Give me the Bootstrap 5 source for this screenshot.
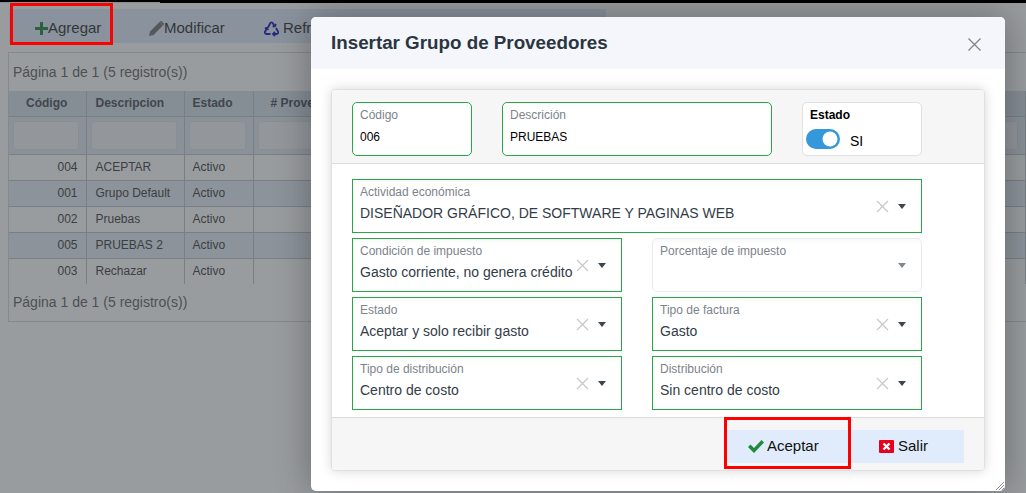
<!DOCTYPE html>
<html lang="es">
<head>
<meta charset="utf-8">
<title>Grupo de Proveedores</title>
<link href="https://cdn.jsdelivr.net/npm/bootstrap@5.3.0/dist/css/bootstrap.min.css" rel="stylesheet">
<style>
html,body{height:493px;overflow:hidden}
body{background:#fff;font-family:"Liberation Sans",Arial,sans-serif;font-size:14px;color:#212529;position:relative}
.franja{height:3px;background:#000;margin-bottom:6px;position:relative;z-index:2;padding-top:2px}
.franja div{height:1px;width:160px;background:#8a8f93}
.barra{height:34px;width:597px;margin-left:9px;background:#e0ebfb;padding:5px 0 0 26px;font-size:15px;color:#333}
.barra .boton{height:29px}
.barra .b1{width:114px}.barra .b2{width:115px}.barra .b3{width:115px}
.barra .boton svg{flex:none}
.panel{margin:9px 0 0 8px;height:270px;border:1px solid #d5d8db;border-right:0;color:#555}
.paginas{height:38px;line-height:38px;padding-left:4px;font-size:14px;color:#666}
.pie{margin-top:-1px}
.tabla{table-layout:fixed;width:100%;border-collapse:collapse;font-size:12px;color:#444}
.tabla .k1{width:77px}.tabla .k2{width:98px}.tabla .k3{width:69px}
.tabla th{background:#d6e0ea;height:25px;padding:0 0 0 9px;text-align:left;border-right:1px solid #bfc5ca;border-bottom:1px solid #bfc5ca;color:#4d5359}
.tabla th.t1{padding-left:17px}
.tabla th.t3{padding-left:8px}
.tabla th.t4{padding-left:17px}
.tabla .filtros td{background:#e0e8f0;height:37px;padding:4px 7px 4px 4px;border-right:1px solid #bfc5ca;border-bottom:1px solid #bfc5ca}
.tabla .filtros span{display:block;height:29px;background:#f2f4f6;border:1px solid #dfe3e7;border-radius:3px}
.tabla td{height:26px;padding:0 8px 0 9px;border-right:1px solid #bfc5ca;border-bottom:1px solid #bfc5ca}
.tabla td.est{padding-left:8px}
.tabla tr.par td{background:#e4ecf5}
.tabla td.num{text-align:right}
.tabla tr:last-child td{border-bottom:0}
.velo{position:absolute;inset:0;background:rgba(52,58,64,.5)}
.ventana{position:absolute;left:311px;top:17px;width:694px;height:474px;border:0;border-radius:5px;background:#fff;box-shadow:0 0 36px rgba(0,0,0,.32);overflow:hidden}
.ventana .cabeza{height:52px;background:#f4f6fb;border:0;border-radius:0;padding:2px 24px 0 20px}
.ventana .titulo{font-size:18.8px;font-weight:700;color:#2b3640;margin:0 0 2px}
.equis{width:13px;height:13px;color:#7d848b}
.ficha{position:absolute;left:20px;top:72px;width:654px;height:382px;border:1px solid #e0e0e0;border-radius:4px;box-shadow:0 0 12px rgba(0,0,0,.16);overflow:hidden}
.ficha .card-header{height:74px;background:#f6f6f6;border-bottom:1px solid #dcdcdc;padding:12px 20px 0;gap:30px;border-radius:0;flex:none}
.ficha .card-body{height:253px;padding:15px 20px 0;flex:none;background:#fff}
.ficha .card-footer{height:54px;background:#f6f6f6;border-top:1px solid #dcdcdc;padding:12px 20px 0 0;border-radius:0;flex:none}
.caja{height:54px;background:#fff;border:1px solid #28a745;border-radius:5px;padding:4px 7px;font-size:12px;color:#000;line-height:16px}
.caja .rotulo{color:#7b838b;display:block;margin-bottom:6px}
.c-corta{width:120px}.c-larga{width:270px}
.c-estado{border-color:#dfe1e3;padding:4px 3px}
.c-estado b{display:block;padding-left:4px;height:22px}
.c-estado .form-check{padding:0;margin:0;min-height:0;height:20px;gap:10px;font-size:14px}
.c-estado .form-check span{margin-top:4px}
.c-estado .form-check-input{float:none;margin:0;width:34px;height:20px;border:0;background-color:#3498db}
.campos{display:grid;grid-template-columns:270px 270px;column-gap:30px;row-gap:5px}
.campo{height:54px;border:1px solid #28a745;padding:0 15px 0 7px;background:#fff;box-shadow:inset 0 6px 6px -6px rgba(0,0,0,.06)}
.campo.ancho{grid-column:1 / span 2}
.campo.vacio{border-color:#e9ebed;border-radius:5px}
.campo .texto{margin-bottom:6px}
.campo .rotulo{display:block;font-size:12px;line-height:14px;color:#7b838b}
.campo .valor{display:block;font-size:14px;line-height:18px;color:#333d47;margin-top:5px;min-height:18px;white-space:nowrap}
.mandos{gap:9px;margin-top:1px}
.mandos svg{display:block}
.cierre{width:13px;height:13px;color:#c8c8c8}
.punta{width:0;height:0;border-left:4px solid transparent;border-right:4px solid transparent;border-top:5px solid #3c4650}
.vacio .punta{border-top-color:#7f878f}
.accion{height:33px;background:#e0ebfb;border:0;border-radius:0;font-size:15px;color:#111;padding:0;gap:3px}
.accion:hover{background:#e0ebfb;color:#111}
.a-ok{width:121px;padding-left:21px}.a-no{width:116px;padding-left:31px;gap:4px}
.marca{position:absolute;border:3px solid #f00;pointer-events:none}
.marca-a{left:10px;top:3px;width:103px;height:42px}
.marca-b{left:724px;top:417px;width:127px;height:52px}
.asa{position:absolute;right:1px;bottom:1px;width:8px;height:8px}
</style>
</head>
<body>
<div class="franja"><div></div></div>
<div class="barra d-flex align-items-center">
  <div class="boton b1 d-flex align-items-center">
    <svg width="13" height="13" viewBox="0 0 13 13"><path d="M5 0h3v5h5v3H8v5H5V8H0V5h5z" fill="#1f8a3a"/></svg><span>Agregar</span>
  </div>
  <div class="boton b2 d-flex align-items-center">
    <svg width="15" height="15" viewBox="0 0 15 15"><path d="M0 15l1-4.500L10.500 1 14 4.500 4.500 14z" fill="#777"/><path d="M11.300.3a1 1 0 0 1 1.400 0l2 2a1 1 0 0 1 0 1.400l-.6.6-3.400-3.400z" fill="#777"/></svg><span>Modificar</span>
  </div>
  <div class="boton b3 d-flex align-items-center gap-1">
    <svg width="15" height="16" viewBox="0 0 15 16" fill="none" stroke="#1818b8" stroke-width="1.800"><path d="M4 6.500L6.300 2q1.200-1.300 2.400 0l1.600 2.700"/><path d="M8.600 5.500l2.400-.3.800-2.300"/><path d="M12 7l2 3.600q.8 1.900-1.200 2.400H9.500"/><path d="M11 11l-2 2 2 2"/><path d="M6.500 13H2.200Q.3 12.500 1 10.700L3 7.300"/><path d="M.8 7.300l2.400-.6.800 2.300"/></svg><span>Refrescar</span>
  </div>
</div>
<div class="panel">
  <div class="paginas">Página 1 de 1 (5 registro(s))</div>
  <table class="tabla">
    <colgroup><col class="k1"><col class="k2"><col class="k3"><col></colgroup>
    <thead>
      <tr><th class="t1">Código</th><th>Descripcion</th><th class="t3">Estado</th><th class="t4"># Proveedores</th></tr>
    </thead>
    <tbody>
      <tr class="filtros"><td><span></span></td><td><span></span></td><td><span></span></td><td><span></span></td></tr>
      <tr><td class="num">004</td><td>ACEPTAR</td><td class="est">Activo</td><td></td></tr>
      <tr class="par"><td class="num">001</td><td>Grupo Default</td><td class="est">Activo</td><td></td></tr>
      <tr><td class="num">002</td><td>Pruebas</td><td class="est">Activo</td><td></td></tr>
      <tr class="par"><td class="num">005</td><td>PRUEBAS 2</td><td class="est">Activo</td><td></td></tr>
      <tr><td class="num">003</td><td>Rechazar</td><td class="est">Activo</td><td></td></tr>
    </tbody>
  </table>
  <div class="paginas pie">Página 1 de 1 (5 registro(s))</div>
</div>
<div class="velo"></div>
<div class="ventana modal-content">
  <div class="cabeza modal-header d-flex justify-content-between align-items-center">
    <h5 class="titulo">Insertar Grupo de Proveedores</h5>
    <svg class="equis" viewBox="0 0 13 13" fill="none" stroke="currentColor" stroke-width="1.300"><path d="M.5.5l12 12M12.500.5l-12 12"/></svg>
  </div>
  <div class="ficha card">
    <div class="card-header d-flex">
      <div class="caja c-corta"><span class="rotulo">Código</span>006</div>
      <div class="caja c-larga"><span class="rotulo">Descrición</span>PRUEBAS</div>
      <div class="caja c-corta c-estado"><b>Estado</b>
        <div class="form-check form-switch d-flex align-items-center"><input class="form-check-input" type="checkbox" checked aria-label="Estado"><span>SI</span></div>
      </div>
    </div>
    <div class="card-body">
      <div class="campos">
        <div class="campo ancho d-flex justify-content-between align-items-center">
          <div class="texto"><span class="rotulo">Actividad económica</span><span class="valor">DISEÑADOR GRÁFICO, DE SOFTWARE Y PAGINAS WEB</span></div>
          <div class="mandos d-flex align-items-center"><svg class="cierre" viewBox="0 0 13 13" fill="none" stroke="currentColor" stroke-width="1.200"><path d="M1 1l11 11M12 1L1 12"/></svg><i class="punta"></i></div>
        </div>
        <div class="campo d-flex justify-content-between align-items-center">
          <div class="texto"><span class="rotulo">Condición de impuesto</span><span class="valor">Gasto corriente, no genera crédito</span></div>
          <div class="mandos d-flex align-items-center"><svg class="cierre" viewBox="0 0 13 13" fill="none" stroke="currentColor" stroke-width="1.200"><path d="M1 1l11 11M12 1L1 12"/></svg><i class="punta"></i></div>
        </div>
        <div class="campo vacio d-flex justify-content-between align-items-center">
          <div class="texto"><span class="rotulo">Porcentaje de impuesto</span><span class="valor"></span></div>
          <div class="mandos d-flex align-items-center"><i class="punta"></i></div>
        </div>
        <div class="campo d-flex justify-content-between align-items-center">
          <div class="texto"><span class="rotulo">Estado</span><span class="valor">Aceptar y solo recibir gasto</span></div>
          <div class="mandos d-flex align-items-center"><svg class="cierre" viewBox="0 0 13 13" fill="none" stroke="currentColor" stroke-width="1.200"><path d="M1 1l11 11M12 1L1 12"/></svg><i class="punta"></i></div>
        </div>
        <div class="campo d-flex justify-content-between align-items-center">
          <div class="texto"><span class="rotulo">Tipo de factura</span><span class="valor">Gasto</span></div>
          <div class="mandos d-flex align-items-center"><svg class="cierre" viewBox="0 0 13 13" fill="none" stroke="currentColor" stroke-width="1.200"><path d="M1 1l11 11M12 1L1 12"/></svg><i class="punta"></i></div>
        </div>
        <div class="campo d-flex justify-content-between align-items-center">
          <div class="texto"><span class="rotulo">Tipo de distribución</span><span class="valor">Centro de costo</span></div>
          <div class="mandos d-flex align-items-center"><svg class="cierre" viewBox="0 0 13 13" fill="none" stroke="currentColor" stroke-width="1.200"><path d="M1 1l11 11M12 1L1 12"/></svg><i class="punta"></i></div>
        </div>
        <div class="campo d-flex justify-content-between align-items-center">
          <div class="texto"><span class="rotulo">Distribución</span><span class="valor">Sin centro de costo</span></div>
          <div class="mandos d-flex align-items-center"><svg class="cierre" viewBox="0 0 13 13" fill="none" stroke="currentColor" stroke-width="1.200"><path d="M1 1l11 11M12 1L1 12"/></svg><i class="punta"></i></div>
        </div>
      </div>
    </div>
    <div class="card-footer d-flex justify-content-end">
      <button type="button" class="btn accion a-ok d-flex align-items-center">
        <svg width="16" height="13" viewBox="0 0 16 13"><path d="M0 7l2.500-2.500L6 8l7.500-8L16 2.500 6 13z" fill="#1f8a3a"/></svg><span>Aceptar</span>
      </button>
      <button type="button" class="btn accion a-no d-flex align-items-center">
        <svg width="15" height="13" viewBox="0 0 15 13"><rect width="15" height="13" rx="1" fill="#e8001c"/><path d="M4.500 3.500l6 6M10.500 3.500l-6 6" stroke="#fff" stroke-width="2.400"/></svg><span>Salir</span>
      </button>
    </div>
  </div>
  <svg class="asa" viewBox="0 0 8 8" stroke="#8a8a8a" stroke-width="1"><path d="M0 8l8-8M3 8l5-5M6 8l2-2"/></svg>
</div>
<div class="marca marca-a"></div>
<div class="marca marca-b"></div>
</body>
</html>
